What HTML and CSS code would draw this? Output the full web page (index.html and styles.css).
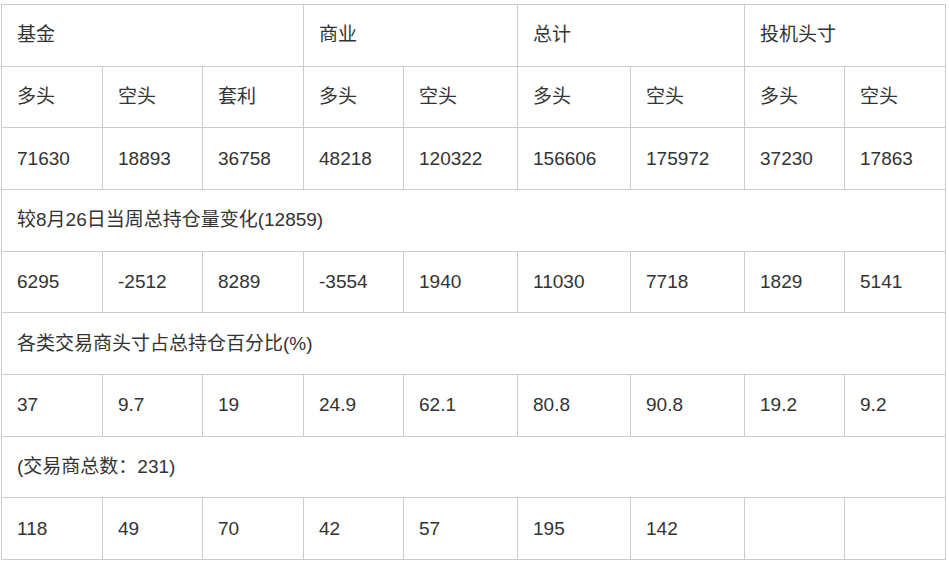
FILE: index.html
```html
<!DOCTYPE html>
<html lang="zh-CN">
<head>
<meta charset="utf-8">
<link rel="stylesheet" href="styles.css">
</head>
<body>
<table class="data">
  <colgroup>
    <col class="c1"><col class="c2"><col class="c3"><col class="c4"><col class="c5"><col class="c6"><col class="c7"><col class="c8"><col class="c9">
  </colgroup>
  <tbody>
    <tr><td colspan="3">基金</td><td colspan="2">商业</td><td colspan="2">总计</td><td colspan="2">投机头寸</td></tr>
    <tr><td>多头</td><td>空头</td><td>套利</td><td>多头</td><td>空头</td><td>多头</td><td>空头</td><td>多头</td><td>空头</td></tr>
    <tr><td>71630</td><td>18893</td><td>36758</td><td>48218</td><td>120322</td><td>156606</td><td>175972</td><td>37230</td><td>17863</td></tr>
    <tr><td colspan="9">较8月26日当周总持仓量变化(12859)</td></tr>
    <tr><td>6295</td><td>-2512</td><td>8289</td><td>-3554</td><td>1940</td><td>11030</td><td>7718</td><td>1829</td><td>5141</td></tr>
    <tr><td colspan="9">各类交易商头寸占总持仓百分比(%)</td></tr>
    <tr><td>37</td><td>9.7</td><td>19</td><td>24.9</td><td>62.1</td><td>80.8</td><td>90.8</td><td>19.2</td><td>9.2</td></tr>
    <tr><td colspan="9">(交易商总数：231)</td></tr>
    <tr><td>118</td><td>49</td><td>70</td><td>42</td><td>57</td><td>195</td><td>142</td><td></td><td></td></tr>
  </tbody>
</table>
</body>
</html>
```
FILE: styles.css
```css
html, body {
  margin: 0;
  padding: 0;
  background: #ffffff;
}
body {
  padding: 4px 0 0 1px;
  font-family: "Liberation Sans", "Noto Sans CJK SC", sans-serif;
  font-size: 19px;
  color: #333333;
}
.data {
  border-collapse: collapse;
  table-layout: fixed;
  width: 944px;
}
.c1 { width: 101px; }
.c2 { width: 100px; }
.c3 { width: 101px; }
.c4 { width: 100px; }
.c5 { width: 114px; }
.c6 { width: 113px; }
.c7 { width: 114px; }
.c8 { width: 100px; }
.c9 { width: 101px; }
.data tr {
  height: 61.67px;
}
.data td {
  border: 1px solid #cccccc;
  padding: 0 15px;
  vertical-align: middle;
  text-align: left;
  white-space: nowrap;
  line-height: 24px;
}
```
